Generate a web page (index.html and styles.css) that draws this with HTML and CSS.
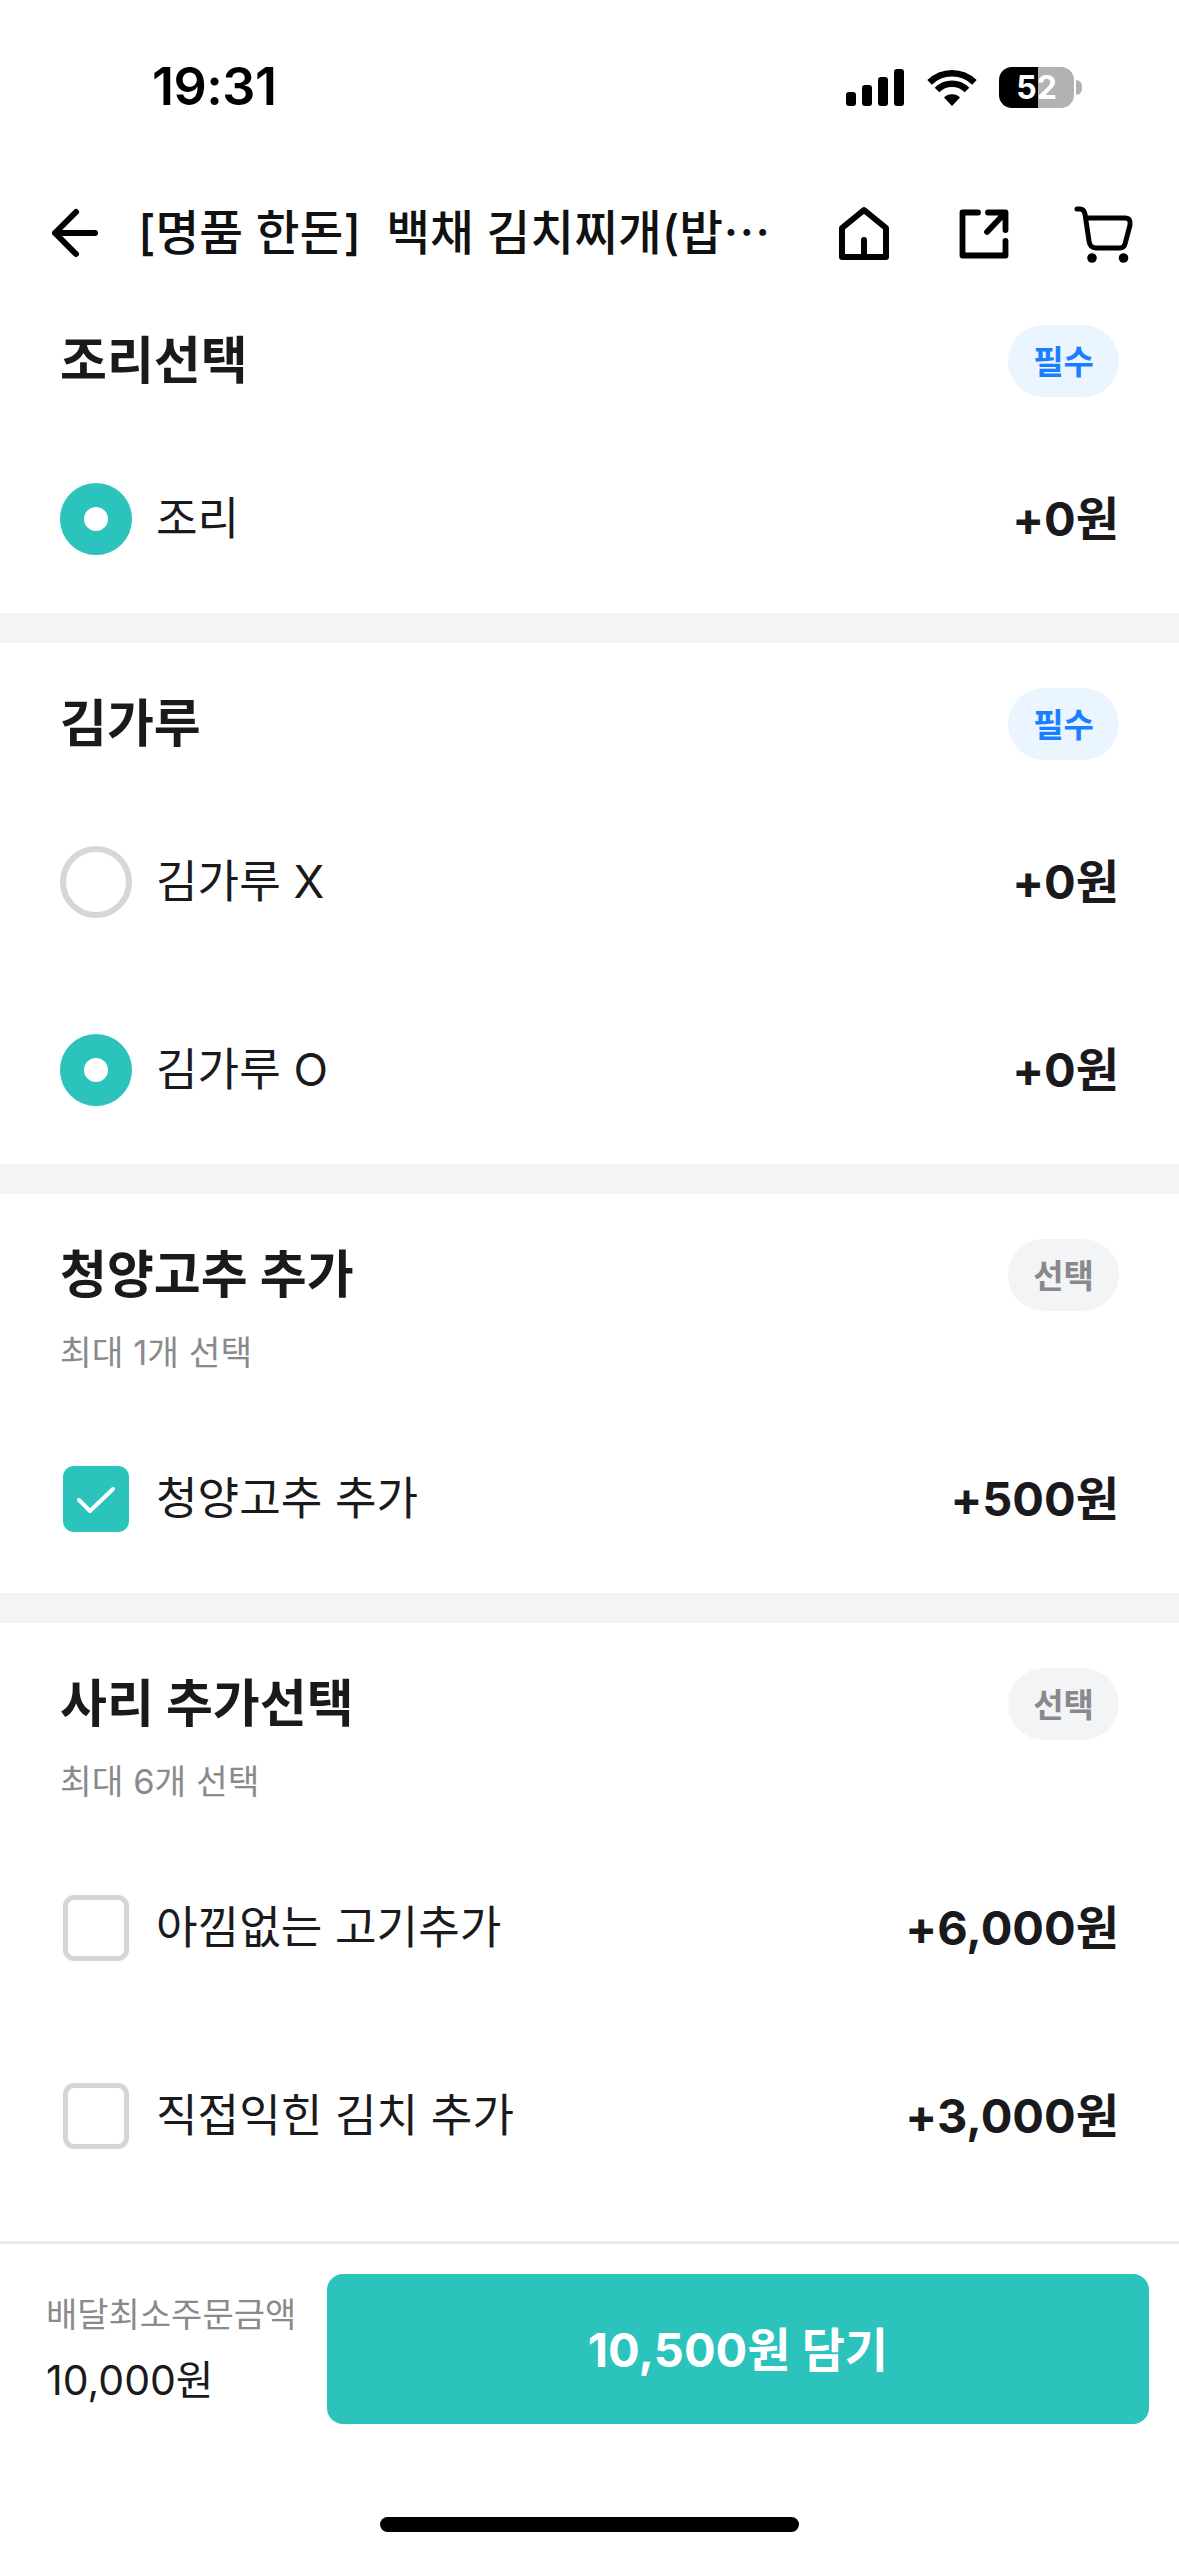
FILE: index.html
```html
<!DOCTYPE html>
<html lang="ko">
<head>
<meta charset="utf-8">
<title>옵션 선택</title>
<link rel="stylesheet" href="styles.css">
</head>
<body>
<div class="page">
  <div class="status">
    <span class="time">19:31</span>
    <div class="status-icons">
      <svg class="signal" width="58" height="37" viewBox="0 0 58 37"><rect x="0" y="23" width="10" height="14" rx="3"/><rect x="16" y="16" width="10" height="21" rx="3"/><rect x="32" y="8" width="10" height="29" rx="3"/><rect x="48" y="0" width="10" height="37" rx="3"/></svg>
      <svg class="wifi" width="50" height="37" viewBox="0 0 50 37"><path d="M2.6 13.4A32 32 0 0 1 47.4 13.4M10 21A21 21 0 0 1 40 21" fill="none" stroke="#000" stroke-width="6.5"/><path d="M25 37L17 28.5A11.5 11.5 0 0 1 33 28.5Z"/></svg>
      <div class="battery"><span>52</span></div>
    </div>
  </div>
  <header class="nav">
    <svg class="back" width="54" height="60" viewBox="0 0 54 60"><path d="M49 30H9M30 9L9 30L30 51" fill="none" stroke="#000" stroke-width="6" stroke-linecap="round" stroke-linejoin="round"/></svg>
    <h1 class="nav-title">[명품 한돈]  백채 김치찌개(밥⋯</h1>
    <div class="nav-icons">
      <svg width="60" height="60" viewBox="0 0 60 60"><path d="M8 25L30 7L52 25V54H8ZM30 37V54" fill="none" stroke="#000" stroke-width="6" stroke-linecap="round" stroke-linejoin="round"/></svg>
      <svg width="60" height="60" viewBox="0 0 60 60"><path d="M24 9.5H8.5V52.5H51.5V38M34 9.5H51.5V27M33 29L50 11" fill="none" stroke="#000" stroke-width="5.8" stroke-linecap="round" stroke-linejoin="round"/></svg>
      <svg width="60" height="60" viewBox="0 0 60 60"><path d="M3 6H6Q10 6 11 11L15 38Q16 45 22 45H46Q50 45 51 41L56 22Q57 15 51 15H13" fill="none" stroke="#000" stroke-width="5" stroke-linecap="round" stroke-linejoin="round"/><circle cx="18" cy="55" r="4.8"/><circle cx="49.5" cy="55" r="4.8"/></svg>
    </div>
  </header>
  <main class="scroll">
    <section class="group group-first">
      <div class="group-head"><h2>조리선택</h2><span class="badge badge-req">필수</span></div>
      <div class="row"><span class="radio radio-on"></span><span class="label">조리</span><span class="price">+0원</span></div>
    </section>
    <section class="group">
      <div class="group-head"><h2>김가루</h2><span class="badge badge-req">필수</span></div>
      <div class="row"><span class="radio"></span><span class="label">김가루 X</span><span class="price">+0원</span></div>
      <div class="row"><span class="radio radio-on"></span><span class="label">김가루 O</span><span class="price">+0원</span></div>
    </section>
    <section class="group">
      <div class="group-head"><h2>청양고추 추가</h2><span class="badge badge-opt">선택</span></div>
      <p class="sub">최대 1개 선택</p>
      <div class="row"><span class="check check-on"><svg width="66" height="66" viewBox="0 0 66 66"><path d="M16 34L27 45L50 23" fill="none" stroke="#fff" stroke-width="4" stroke-linecap="round" stroke-linejoin="round"/></svg></span><span class="label">청양고추 추가</span><span class="price">+500원</span></div>
    </section>
    <section class="group">
      <div class="group-head"><h2>사리 추가선택</h2><span class="badge badge-opt">선택</span></div>
      <p class="sub">최대 6개 선택</p>
      <div class="row"><span class="check"></span><span class="label">아낌없는 고기추가</span><span class="price">+6,000원</span></div>
      <div class="row"><span class="check"></span><span class="label">직접익힌 김치 추가</span><span class="price">+3,000원</span></div>
    </section>
  </main>
  <footer class="footer">
    <div class="footer-main">
      <div class="minimum">
        <span class="minimum-label">배달최소주문금액</span>
        <span class="minimum-value">10,000원</span>
      </div>
      <button class="add" type="button">10,500원 담기</button>
    </div>
    <div class="home-indicator"></div>
  </footer>
</div>
</body>
</html>
```
FILE: styles.css
```css
* { box-sizing: border-box; }
html, body { margin: 0; padding: 0; background: #fff; }
body { font-family: Inter, "Noto Sans CJK KR", sans-serif; color: #1a1a1c; }
.page { width: 1179px; height: 2556px; display: flex; flex-direction: column; overflow: hidden; background: #fff; }

.status { height: 165px; flex: none; display: flex; justify-content: space-between; padding: 65px 105px 0 152px; }
.time { font-size: 52px; font-weight: 600; line-height: 44px; color: #000; letter-spacing: -0.5px; }
.status-icons { display: flex; gap: 23px; align-items: flex-start; padding-top: 4px; }
.battery { position: relative; width: 75px; height: 41px; margin-top: -2px; margin-left: -1px; border-radius: 13px; background: linear-gradient(90deg, #000 52%, #b2b2b2 52%); color: #fff; font-size: 32px; font-weight: 700; line-height: 41px; text-align: center; }
.battery::after { content: ""; position: absolute; left: 77px; top: 13px; width: 6px; height: 15px; border-radius: 0 8px 8px 0; background: #b2b2b2; }

.nav { height: 136px; flex: none; display: flex; align-items: center; padding: 0 45px 0 46px; }
.back { flex: none; }
.nav-title { flex: 1; margin: 0 0 0 38px; font-size: 47.6px; font-weight: 500; line-height: 60px; color: #111; white-space: pre; overflow: hidden; }
.nav-icons { display: flex; gap: 60px; flex: none; }

.scroll { flex: 1; min-height: 0; overflow: hidden; background: #fff; display: flex; flex-direction: column; }
.group { background: #fff; padding: 45px 60px 0; flex: none; }
.group + .group { border-top: 30px solid #f3f4f6; }
.group-first { padding-top: 24px; }
.group-head { height: 72px; display: flex; justify-content: space-between; align-items: center; margin-bottom: 28px; }
.group-head h2 { margin: 0; font-size: 51px; font-weight: 700; line-height: 72px; }
.badge { width: 111px; height: 72px; padding-bottom: 3px; border-radius: 36px; font-size: 33px; font-weight: 700; display: flex; align-items: center; justify-content: center; }
.badge-req { background: #ebf5ff; color: #1a7fff; }
.badge-opt { background: #f3f4f6; color: #88898d; }
.sub { margin: -6px 0 32px; font-size: 34.5px; line-height: 40px; color: #8a8a8d; }

.row { height: 188px; display: flex; align-items: center; }
.radio { flex: none; width: 72px; height: 72px; border-radius: 50%; border: 6px solid #d5d6d8; }
.radio-on { border: 24px solid #2bc3bc; background: #fff; }
.check { flex: none; width: 66px; height: 66px; margin: 0 3px; border-radius: 11px; border: 5px solid #d5d6d8; display: block; }
.check-on { border: 0; background: #2bc3bc; }
.check-on svg { display: block; }
.label { flex: 1; margin-left: 24px; font-size: 45.2px; line-height: 60px; color: #1a1a1c; }
.price { font-size: 47px; font-weight: 700; line-height: 60px; color: #1a1a1c; }

.footer { height: 315px; flex: none; border-top: 3px solid #ececec; background: #fff; padding: 30px 30px 24px 46px; display: flex; flex-direction: column; }
.footer-main { display: flex; }
.minimum { width: 281px; flex: none; display: flex; flex-direction: column; padding-top: 18px; }
.minimum-label { font-size: 34px; line-height: 46px; color: #8a8a8d; }
.minimum-value { margin-top: 19px; font-size: 41px; line-height: 46px; color: #1a1a1c; }
.add { flex: 1; height: 150px; border: 0; border-radius: 16px; background: #2bc3bc; color: #fff; font-family: inherit; font-size: 47px; font-weight: 700; padding: 0 0 5px; }
.home-indicator { align-self: flex-start; width: 419px; height: 15px; margin: auto 0 0 334px; border-radius: 8px; background: #000; }
```
